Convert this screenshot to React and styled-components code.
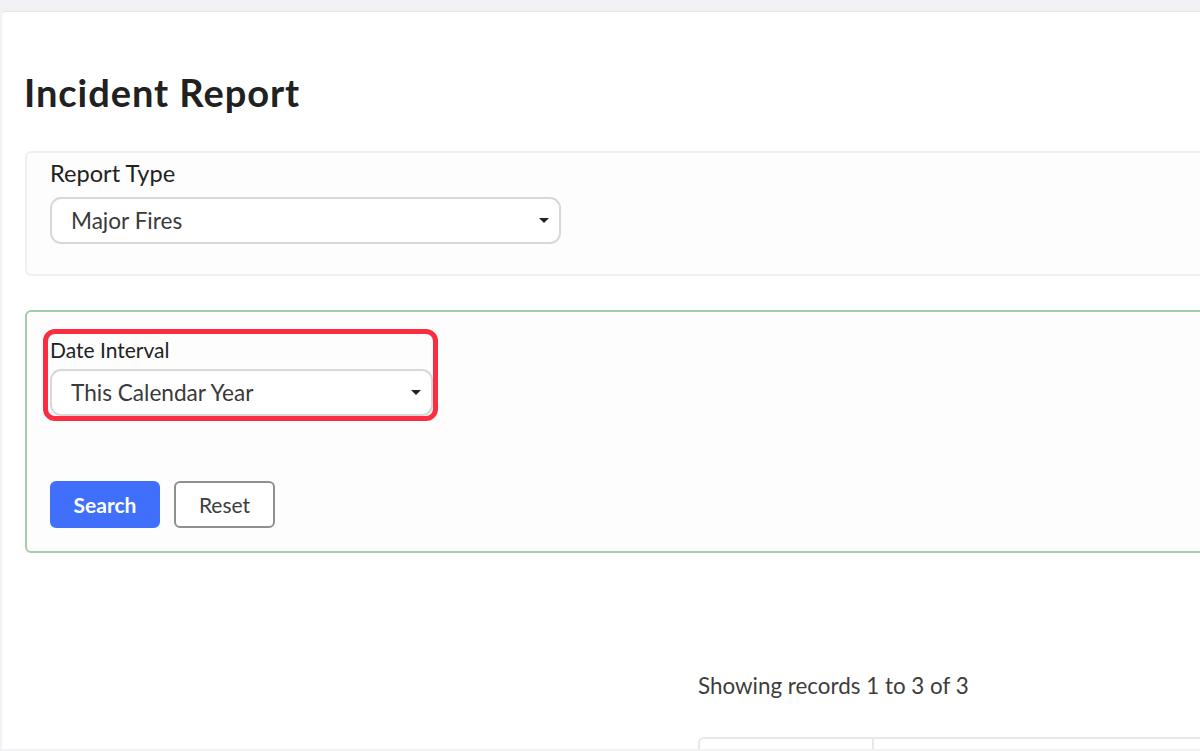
import styled, { createGlobalStyle } from "styled-components";

const GlobalStyle = createGlobalStyle`
  html, body {
    margin: 0;
    height: 100%;
    overflow: hidden;
    background: #f2f2f6;
  }

  body {
    font-family: "Lato", "Liberation Sans", sans-serif;
    color: #222;
  }
`;

const Page = styled.div`
  width: 1200px;
  height: 751px;
  box-sizing: border-box;
  padding: 11px 0 2px 2px;
  overflow: hidden;
  background: #f2f2f6;
`;

const Sheet = styled.main`
  width: 1240px;
  height: 738px;
  box-sizing: border-box;
  padding: 0 0 0 23px;
  background: #fff;
  border-top: 1px solid #e6e6e8;
  border-radius: 4px 0 0 0;
  overflow: hidden;
`;

const Title = styled.h1`
  margin: 58px 0 37px -1px;
  font-size: 38px;
  line-height: 44px;
  font-weight: 700;
  letter-spacing: 0.95px;
  color: #212121;
`;

const Panel = styled.section`
  width: 1220px;
  height: ${(p) => p.$height}px;
  box-sizing: border-box;
  margin-bottom: ${(p) => p.$gap}px;
  padding: ${(p) => p.$top}px 0 0 23px;
  background: #fdfdfd;
  border: 2px solid ${(p) => p.$border};
  border-radius: 6px;
`;

const Field = styled.div`
  position: relative;
  width: 511px;
`;

const Label = styled.label`
  display: block;
  margin-bottom: ${(p) => p.$gap}px;
  font-size: ${(p) => p.$size}px;
  line-height: 28px;
  color: #222;
`;

const Select = styled.div`
  display: flex;
  align-items: center;
  justify-content: space-between;
  width: ${(p) => p.$width}px;
  height: 47px;
  box-sizing: border-box;
  padding: 0 10px 0 19px;
  background: #fff;
  border: 2px solid #d8d8d8;
  border-radius: 11px;
  font-size: 22.6px;
  color: #3a3a3a;
`;

const Caret = styled.span`
  width: 0;
  height: 0;
  border-left: 5px solid transparent;
  border-right: 5px solid transparent;
  border-top: 5px solid #222;
`;

const Highlight = styled.div`
  position: absolute;
  left: -7px;
  top: -7px;
  width: 395px;
  height: 92px;
  box-sizing: border-box;
  border: 5px solid #fb2d40;
  border-radius: 12px;
  pointer-events: none;
`;

const Actions = styled.div`
  display: flex;
  gap: 14px;
  margin-top: 65px;
`;

const Button = styled.button`
  width: ${(p) => p.$width}px;
  height: 47px;
  padding: 0;
  font-family: inherit;
  font-size: 21px;
  font-weight: ${(p) => (p.$primary ? 700 : 400)};
  color: ${(p) => (p.$primary ? "#fff" : "#3d3d3d")};
  background: ${(p) => (p.$primary ? "#4070fb" : "#fff")};
  border: 2px solid ${(p) => (p.$primary ? "#4070fb" : "#8f8f8f")};
  border-radius: 6px;
`;

const Records = styled.div`
  margin: 0 0 0 673px;
  padding-top: 119px;
  font-size: 22.4px;
  line-height: 28px;
  color: #3d3d3d;
`;

const TableHead = styled.div`
  display: grid;
  grid-template-columns: 172px 1fr;
  width: 520px;
  height: 40px;
  margin: 37px 0 0 673px;
  box-sizing: border-box;
  border: 2px solid #e8e8e8;
  border-radius: 6px 0 0 0;
`;

const HeadCell = styled.div`
  & + & {
    border-left: 2px solid #e8e8e8;
  }
`;

export default function App() {
  return (
    <>
      <GlobalStyle />
      <Page>
        <Sheet>
          <Title>Incident Report</Title>
          <Panel $height={125} $gap={34} $top={6} $border="#efefef">
            <Field>
              <Label $size={23.6} $gap={10}>Report Type</Label>
              <Select $width={511}>
                Major Fires
                <Caret />
              </Select>
            </Field>
          </Panel>
          <Panel $height={243} $gap={0} $top={24} $border="#a3cda9">
            <Field>
              <Label $size={21} $gap={5}>Date Interval</Label>
              <Select $width={383}>
                This Calendar Year
                <Caret />
              </Select>
              <Highlight />
            </Field>
            <Actions>
              <Button $primary $width={110}>Search</Button>
              <Button $width={101}>Reset</Button>
            </Actions>
          </Panel>
          <Records>Showing records 1 to 3 of 3</Records>
          <TableHead>
            <HeadCell />
            <HeadCell />
          </TableHead>
        </Sheet>
      </Page>
    </>
  );
}
